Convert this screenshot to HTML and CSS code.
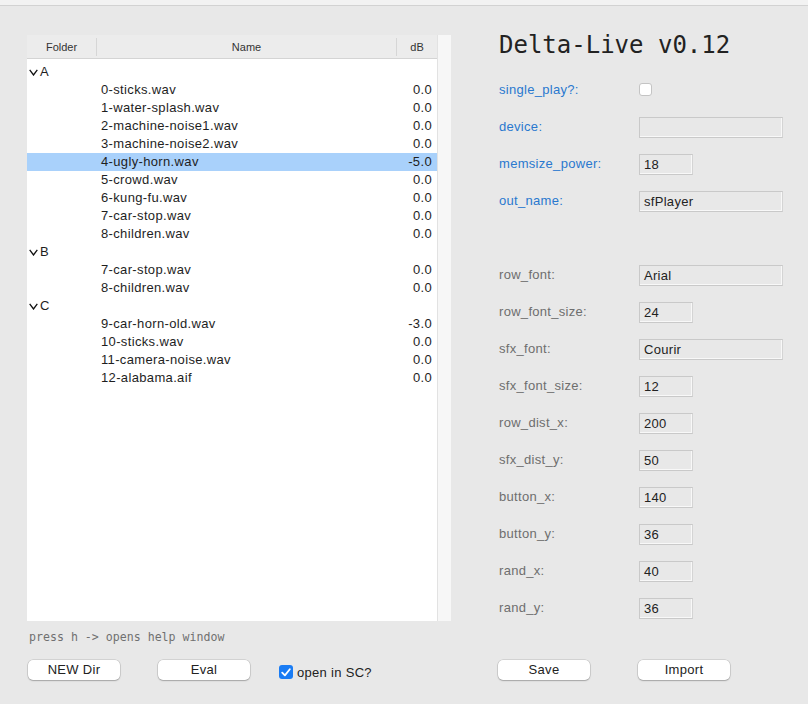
FILE: index.html
```html
<!DOCTYPE html>
<html>
<head>
<meta charset="utf-8">
<link rel="stylesheet" href="styles.css">
</head>
<body>
<div class="topbar"></div>
<div class="main">
  <div class="left">
    <div class="tablebox">
      <div class="list">
        <div class="thead">
          <div class="th c-folder">Folder</div>
          <div class="th c-name">Name</div>
          <div class="th c-db">dB</div>
        </div>
        <div class="tbody">
          <div class="row folder"><svg class="chev" width="9" height="7" viewBox="0 0 9 7"><path d="M0.7 0.8 L4.5 6 L8.3 0.8" fill="none" stroke="#111" stroke-width="1.3"/></svg>A</div>
          <div class="row"><span class="name">0-sticks.wav</span><span class="db">0.0</span></div>
          <div class="row"><span class="name">1-water-splash.wav</span><span class="db">0.0</span></div>
          <div class="row"><span class="name">2-machine-noise1.wav</span><span class="db">0.0</span></div>
          <div class="row"><span class="name">3-machine-noise2.wav</span><span class="db">0.0</span></div>
          <div class="row selected"><span class="name">4-ugly-horn.wav</span><span class="db">-5.0</span></div>
          <div class="row"><span class="name">5-crowd.wav</span><span class="db">0.0</span></div>
          <div class="row"><span class="name">6-kung-fu.wav</span><span class="db">0.0</span></div>
          <div class="row"><span class="name">7-car-stop.wav</span><span class="db">0.0</span></div>
          <div class="row"><span class="name">8-children.wav</span><span class="db">0.0</span></div>
          <div class="row folder"><svg class="chev" width="9" height="7" viewBox="0 0 9 7"><path d="M0.7 0.8 L4.5 6 L8.3 0.8" fill="none" stroke="#111" stroke-width="1.3"/></svg>B</div>
          <div class="row"><span class="name">7-car-stop.wav</span><span class="db">0.0</span></div>
          <div class="row"><span class="name">8-children.wav</span><span class="db">0.0</span></div>
          <div class="row folder"><svg class="chev" width="9" height="7" viewBox="0 0 9 7"><path d="M0.7 0.8 L4.5 6 L8.3 0.8" fill="none" stroke="#111" stroke-width="1.3"/></svg>C</div>
          <div class="row"><span class="name">9-car-horn-old.wav</span><span class="db">-3.0</span></div>
          <div class="row"><span class="name">10-sticks.wav</span><span class="db">0.0</span></div>
          <div class="row"><span class="name">11-camera-noise.wav</span><span class="db">0.0</span></div>
          <div class="row"><span class="name">12-alabama.aif</span><span class="db">0.0</span></div>
        </div>
      </div>
      <div class="scroll"></div>
    </div>
    <div class="help">press h -&gt; opens help window</div>
    <div class="btnrow btnrow-left">
      <button class="btn">NEW Dir</button>
      <button class="btn btn-eval">Eval</button>
      <label class="check-label"><span class="checkbox checked"><svg width="10" height="9" viewBox="0 0 10 9"><path d="M1.2 4.6 L3.9 7.4 L8.8 1.2" fill="none" stroke="#fff" stroke-width="1.8" stroke-linecap="round" stroke-linejoin="round"/></svg></span>open in SC?</label>
    </div>
  </div>
  <div class="right">
    <h1 class="title">Delta-Live v0.12</h1>
    <div class="form">
      <div class="frow"><span class="lbl blue">single_play?:</span><span class="checkbox"></span></div>
      <div class="frow"><span class="lbl blue">device:</span><span class="field wide"></span></div>
      <div class="frow"><span class="lbl blue">memsize_power:</span><span class="field narrow">18</span></div>
      <div class="frow"><span class="lbl blue">out_name:</span><span class="field wide">sfPlayer</span></div>
      <div class="frow"></div>
      <div class="frow"><span class="lbl">row_font:</span><span class="field wide">Arial</span></div>
      <div class="frow"><span class="lbl">row_font_size:</span><span class="field narrow">24</span></div>
      <div class="frow"><span class="lbl">sfx_font:</span><span class="field wide">Courir</span></div>
      <div class="frow"><span class="lbl">sfx_font_size:</span><span class="field narrow">12</span></div>
      <div class="frow"><span class="lbl">row_dist_x:</span><span class="field narrow">200</span></div>
      <div class="frow"><span class="lbl">sfx_dist_y:</span><span class="field narrow">50</span></div>
      <div class="frow"><span class="lbl">button_x:</span><span class="field narrow">140</span></div>
      <div class="frow"><span class="lbl">button_y:</span><span class="field narrow">36</span></div>
      <div class="frow"><span class="lbl">rand_x:</span><span class="field narrow">40</span></div>
      <div class="frow"><span class="lbl">rand_y:</span><span class="field narrow">36</span></div>
    </div>
    <div class="btnrow btnrow-right">
      <button class="btn">Save</button>
      <button class="btn btn-import">Import</button>
    </div>
  </div>
</div>
</body>
</html>
```

FILE: styles.css
```css
html, body {
  margin: 0;
  padding: 0;
}
body {
  width: 808px;
  height: 704px;
  background: #e8e8e8;
  font-family: "Liberation Sans", Arial, sans-serif;
  font-size: 13px;
  color: #222;
  overflow: hidden;
}
.topbar {
  height: 5px;
  background: #f2f2f2;
  border-bottom: 1px solid #d2d2d2;
}
.main {
  display: flex;
}
.left {
  width: 424px;
  padding-left: 27px;
}
.tablebox {
  margin-top: 29px;
  height: 586px;
  display: flex;
}
.list {
  width: 410px;
  background: #fff;
}
.scroll {
  width: 13px;
  background: #f7f7f7;
  border-left: 1px solid #e2e2e2;
}
.thead {
  display: flex;
  height: 23px;
  background: #ececec;
  border-bottom: 1px solid #d4d4d4;
  font-size: 11px;
  color: #333;
  align-items: center;
}
.th {
  text-align: center;
  height: 18px;
  line-height: 18px;
}
.c-folder {
  width: 69px;
  border-right: 1px solid #d6d6d6;
}
.c-name {
  width: 299px;
  border-right: 1px solid #d6d6d6;
}
.c-db {
  width: 40px;
}
.tbody {
  padding-top: 4px;
}
.row {
  display: flex;
  height: 18px;
  line-height: 18px;
  letter-spacing: 0.35px;
  color: #1e1e1e;
}
.row.selected {
  background: #a9d1fb;
}
.row.folder {
  align-items: center;
  padding-left: 2px;
}
.chev {
  margin-right: 2px;
  margin-top: 1px;
}
.name {
  padding-left: 74px;
  flex: 1;
}
.db {
  padding-right: 5px;
  text-align: right;
}
.help {
  margin-top: 8px;
  height: 16px;
  line-height: 16px;
  padding-left: 2px;
  font-family: "DejaVu Sans Mono", monospace;
  font-size: 11.6px;
  color: #707070;
}
.btnrow {
  display: flex;
  align-items: center;
  margin-top: 15px;
}
.btn {
  width: 92px;
  height: 20px;
  padding: 0;
  border: none;
  border-radius: 5px;
  background: #fff;
  box-shadow: 0 0 0 0.5px rgba(0, 0, 0, 0.18), 0 1px 1.5px rgba(0, 0, 0, 0.22);
  font-family: "Liberation Sans", Arial, sans-serif;
  font-size: 13px;
  letter-spacing: 0.3px;
  color: #222;
  line-height: 20px;
}
.btnrow-left {
  padding-left: 1px;
}
.btn-eval {
  margin-left: 38px;
}
.check-label {
  display: flex;
  align-items: center;
  margin-left: 29px;
  margin-top: 4px;
  letter-spacing: 0.3px;
}
.checkbox {
  display: inline-flex;
  align-items: center;
  justify-content: center;
  box-sizing: border-box;
  width: 13px;
  height: 13px;
  border-radius: 3px;
  background: #fff;
  border: 1px solid #c4c4c4;
}
.checkbox.checked {
  width: 14px;
  height: 14px;
  background: #1a7cf4;
  border: none;
  margin-right: 4px;
}
.right {
  padding-left: 48px;
  flex: 1;
}
.title {
  margin: 24px 0 0 0;
  height: 30px;
  line-height: 30px;
  font-family: "DejaVu Sans Mono", monospace;
  font-size: 24px;
  font-weight: normal;
  color: #222;
}
.form {
  margin-top: 11px;
}
.frow {
  display: flex;
  align-items: center;
  height: 37px;
  letter-spacing: 0.3px;
}
.lbl {
  width: 140px;
  color: #6e6e6e;
}
.lbl.blue {
  color: #2a78cf;
}
.field {
  box-sizing: border-box;
  height: 21px;
  line-height: 19px;
  padding-left: 4px;
  border: 1px solid #c9c9c9;
  border-right-color: #d4d4d4;
  box-shadow: inset -1px -1px 0 #f8f8f8;
  background: #e8e8e8;
  color: #222;
  margin-top: 2px;
}
.field.wide {
  width: 144px;
}
.field.narrow {
  width: 54px;
}
.btnrow-right {
  margin-top: 34px;
  margin-left: -1px;
}
.btn-import {
  margin-left: 48px;
}
```
